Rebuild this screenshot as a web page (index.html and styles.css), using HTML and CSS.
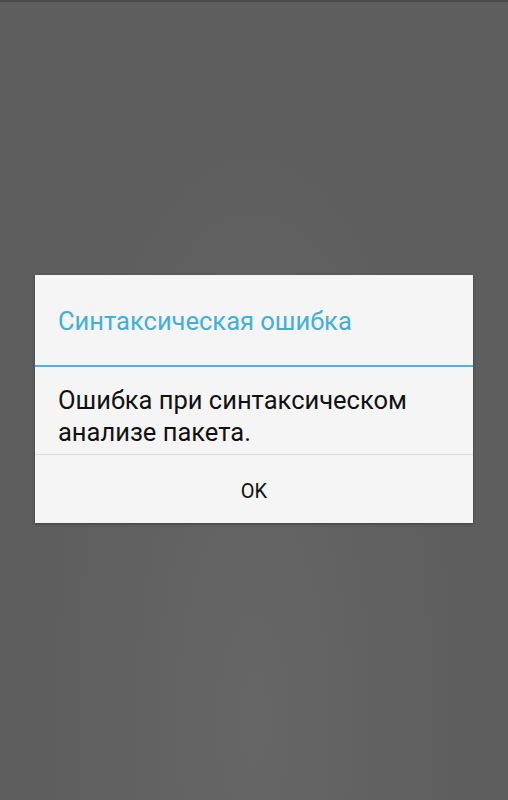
FILE: index.html
```html
<!DOCTYPE html>
<html lang="ru">
<head>
  <meta charset="UTF-8">
  <meta name="viewport" content="width=device-width, initial-scale=1.0">
  <title>Синтаксическая ошибка</title>
  <link rel="stylesheet" href="styles.css">
</head>
<body>
  <!-- Error dialog -->
  <div class="dialog">
    <div class="dialog-title">Синтаксическая ошибка</div>
    <div class="dialog-message">Ошибка при синтаксическом анализе пакета.</div>
    <div class="dialog-buttons">
      <button type="button">OK</button>
    </div>
  </div>
</body>
</html>
```

FILE: styles.css
```css
/* Global Styles */
* {
  margin: 0;
  padding: 0;
  box-sizing: border-box;
}
body {
  font-family: 'Roboto', 'Noto Sans', sans-serif;
  background: radial-gradient(ellipse at 50% 90%, #666 0%, #5e5e5e 60%);
  border-top: 2px solid #4a4a4a;
  height: 100vh;
  display: flex;
  justify-content: center;
  padding-top: 273px;
}

/* Dialog */
.dialog {
  width: 438px;
  height: 248px;
  background: #f5f5f5;
  box-shadow: 0 1px 3px rgba(0, 0, 0, 0.35);
  display: flex;
  flex-direction: column;
}
.dialog-title {
  height: 92px;
  padding: 2px 23px 0;
  display: flex;
  align-items: center;
  color: #42afdb;
  font-size: 25.5px;
  border-bottom: 2px solid #4bb4df;
}
.dialog-message {
  height: 88px;
  padding: 17px 23px 0;
  color: #111;
  font-size: 25.5px;
  line-height: 32px;
  border-bottom: 1px solid #dcdcdc;
}
.dialog-buttons {
  flex: 1;
  display: flex;
}
.dialog-buttons button {
  flex: 1;
  border: none;
  background: transparent;
  font-family: inherit;
  font-size: 20px;
  color: #111;
  padding-top: 3px;
}
```
